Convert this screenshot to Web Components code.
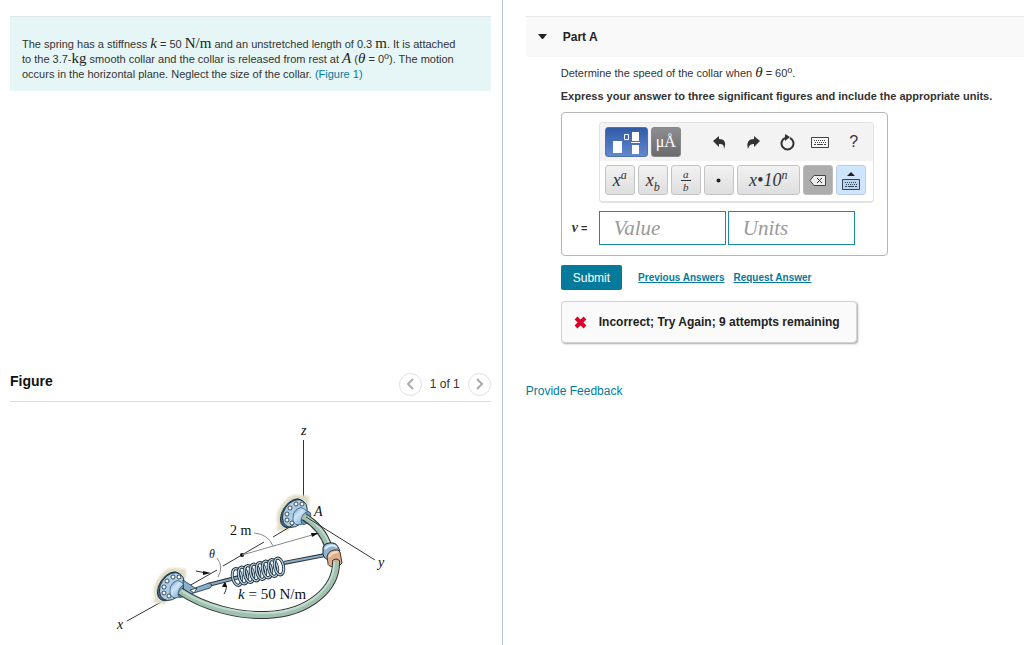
<!DOCTYPE html>
<html lang="en">
<head>
  <meta charset="UTF-8">
  <meta name="viewport" content="width=device-width, initial-scale=1.0">
  <title>Part A</title>
  <style>
    body { margin: 0; font: 12px/15px "Liberation Sans", Arial, sans-serif; color: #333; background: #fff; }
  </style>
</head>
<body>

<split-page>
  <problem-intro slot="left">
    The spring has a stiffness <math-text><i>k</i></math-text> = 50 <math-text>N/m</math-text> and an unstretched length of 0.3 <math-text>m</math-text>. It is attached to the 3.7-<math-text>kg</math-text> smooth collar and the collar is released from rest at <math-text><i>A</i></math-text> (<math-text><i>θ</i></math-text> = 0<degree-mark></degree-mark>). The motion occurs in the horizontal plane. Neglect the size of the collar. <text-link>(Figure 1)</text-link>
  </problem-intro>
  <figure-panel slot="figure">
    <span slot="title">Figure</span>
    <span slot="count">1 of 1</span>
    <collar-figure></collar-figure>
  </figure-panel>
  <part-panel slot="right">
    <span slot="title">Part A</span>
    <span slot="question">Determine the speed of the collar when <math-text><i>θ</i></math-text> = 60<degree-mark></degree-mark>.</span>
    <span slot="hint">Express your answer to three significant figures and include the appropriate units.</span>
    <answer-box></answer-box>
    <answer-actions></answer-actions>
    <result-note>Incorrect; Try Again; 9 attempts remaining</result-note>
  </part-panel>
  <text-link slot="feedback">Provide Feedback</text-link>
</split-page>


<template id="split-page">
  <style>
    :host { display: grid; grid-template-columns: 49% 1fr; min-height: 100vh; }
    .left { border-right: 1px solid #b5c7d6; margin-right: -1px; display: grid; grid-template-rows: 57vh 1fr; padding: 0 11px 0 10px; }
    .right { padding: 16px 0 0 24px; min-width: 0; }
    .intro { padding-top: 16px; }
    .feedback { margin-top: 41px; }
  </style>
  <div class="left">
    <div class="intro"><slot name="left"></slot></div>
    <slot name="figure"></slot>
  </div>
  <main class="right">
    <slot name="right"></slot>
    <div class="feedback"><slot name="feedback"></slot></div>
  </main>
</template>

<template id="problem-intro">
  <style>
    :host { display: block; background: #e6f6f7; border-top: 1px solid #dfe6e7; padding: 20px 28px 9px 12px; font-size: 11px; }
  </style>
  <slot></slot>
</template>

<!-- serif run inside a sans sentence -->
<template id="math-text">
  <style>
    :host { display: inline-block; font-family: "Liberation Serif", "Times New Roman", serif; font-size: 15px; line-height: 12px; color: #222; }
  </style>
  <slot></slot>
</template>

<template id="degree-mark">
  <style>
    :host { display: inline-block; font: 10px/8px "Liberation Serif", serif; vertical-align: 4px; }
  </style>
  o
</template>

<template id="text-link">
  <style>
    :host { display: inline-block; }
    a { color: #047a9c; text-decoration: none; }
    :host([strong]) a { font-weight: bold; font-size: 10px; text-decoration: underline; }
  </style>
  <a href="#"><slot></slot></a>
</template>

<template id="figure-panel">
  <style>
    :host { display: block; }
    header { display: flex; align-items: center; gap: 8px; height: 33px; border-bottom: 1px solid #ddd; }
    h2 { flex: 1; margin: 0; align-self: flex-start; font-size: 14px; line-height: 26px; color: #111; }
    button { width: 23px; height: 23px; padding: 0; border: 1px solid #e0e0e0; border-radius: 50%; background: #fff; display: grid; place-items: center; }
    path { fill: none; stroke: #aaa; stroke-width: 2; }
    .body { padding: 22px 0 0 100px; }
  </style>
  <header>
    <h2><slot name="title"></slot></h2>
    <button aria-label="Previous figure"><svg width="9" height="12"><path d="M7 1L2 6L7 11"/></svg></button>
    <slot name="count"></slot>
    <button aria-label="Next figure"><svg width="9" height="12"><path d="M2 1L7 6L2 11"/></svg></button>
  </header>
  <div class="body"><slot></slot></div>
</template>

<template id="collar-figure">
  <style>
    :host { display: block; }
    svg { display: block; font: 14px "Liberation Serif", "Times New Roman", serif; fill: #111; }
    .axis { stroke: #333; stroke-width: 1; fill: none; }
    .thin { stroke: #888; stroke-width: 1; fill: none; }
    .rim { stroke: #333; fill: none; stroke-linecap: butt; }
    .tube { stroke: #9fc1b0; fill: none; }
    .shine { stroke: #c3dccf; fill: none; stroke-width: 2; }
    .rod { stroke: #86aecb; fill: none; }
    .coil ellipse { fill: none; }
  </style>
  <svg width="290" height="215" viewBox="110 424 290 215" role="img" aria-label="Collar on a circular rod with spring">
    <defs>
      <filter id="soft" x="-30%" y="-30%" width="160%" height="160%"><feGaussianBlur stdDeviation="1"/></filter>
      <linearGradient id="hub" x1="0" y1="0" x2="1" y2="1"><stop offset="0" stop-color="#5f93bd"/><stop offset=".35" stop-color="#cfe6f7"/><stop offset="1" stop-color="#5c91bb"/></linearGradient>
      <g id="flange">
        <path d="M-16 12Q-20 2 -12 -9Q-4 -20 5 -18L15 -17L15 -8L0 10L-6 18L-18 17Z" fill="#dfdcc6" filter="url(#soft)"/>
        <ellipse cx="-1" cy="1" rx="10" ry="16" transform="rotate(34)" fill="#47677f" stroke="#182735" stroke-width=".8"/>
        <ellipse cx="1" rx="11" ry="15" transform="rotate(34)" fill="#a9cde7" stroke="#182735" stroke-width=".8"/>
        <g fill="#fff" stroke="#182735" stroke-width=".8">
          <circle cx="8" cy="-9" r="2"/><circle cx="2" cy="-9" r="2"/><circle cx="-4" cy="-5" r="2"/><circle cx="-7" cy="1" r="2"/><circle cx="-7" cy="7" r="2"/><circle cx="-2" cy="10" r="2"/>
        </g>
        <path d="M-1 6Q-2 0 3 -4Q7 -7 10 -4L16 0L10 11L4 12Q-1 11 -1 6Z" fill="url(#hub)" stroke="#274765" stroke-width=".7"/>
        <ellipse cx="12" cy="5" rx="4" ry="7" transform="rotate(28 12 5)" fill="#6d9cc2" stroke="#274765" stroke-width=".7"/>
      </g>
    </defs>

    <path class="axis" d="M303.5 440V505M127 621L163 601"/>
    <use href="#flange" x="171" y="586"/>
    <use href="#flange" x="294" y="513"/>

    <!-- line between the supports -->
    <path class="axis" d="M189 586L217 570M223 566L264 542M273 537L293 525"/>
    <circle cx="242" cy="555" r="2"/>
    <path class="thin" d="M242 555L312 535M254 533Q268 534 273 546M217 558Q224 567 218 577"/>
    <path class="axis" d="M196 571L206 573M225 583Q228 588 224 594"/>
    <path d="M211 573L203 571L203 575ZM225 581L222 587L227 587Z"/>

    <!-- links on both sides of the spring -->
    <path class="rim" stroke-width="4" d="M284 563L325 555M208 585L239 577"/>
    <path class="rod" stroke-width="2" d="M283 563L326 555M208 585L240 577"/>
    <path d="M183 580L195 588L209 583L212 585L210 588L197 592L184 596Z" fill="#88afcb" stroke="#1c2f40" stroke-width=".8"/>
    <path d="M190 590L197 588L194 593Z" fill="#fff" stroke="#1c2f40" stroke-width=".8"/>

    <!-- upper part of the rod -->
    <path class="rim" stroke-width="8" d="M304 517Q322 527 329 548"/>
    <path class="tube" stroke-width="6" d="M303 516Q322 527 329 548"/>
    <path class="shine" d="M306 517Q324 528 330 545"/>
    <path class="axis" d="M306 517L375 560"/>
    <path d="M319 533L311 533L312 537Z"/>

    <path d="M323 551Q322 544 329 543Q336 542 338 547L340 551L328 560Q322 557 323 551Z" fill="#8db5d1" stroke="#182735"/>
    <path d="M325 549Q330 543 337 547" stroke="#d9ebf8" stroke-width="2" fill="none"/>
    <path d="M327 557Q328 551 334 550Q339 549 340 552L342 563Q340 567 334 567Q327 566 328 563Z" fill="#ddb08e" stroke="#493126"/>
    <path d="M329 557Q332 552 338 552" stroke="#f3d9c4" stroke-width="2" fill="none"/>

    <!-- lower part of the rod -->
    <path class="rim" stroke-width="8" d="M180 591C205 608 239 616 267 615C311 613 337 587 336 561"/>
    <path class="tube" stroke-width="6" d="M180 591C205 608 239 616 267 615C311 613 337 587 336 561"/>
    <path class="shine" d="M182 591C206 607 240 614 267 613C309 612 335 586 334 562"/>
    <path d="M332 561Q336 557 340 561" stroke="#493126" fill="none"/>

    <g class="coil"></g>

    <text x="301" y="435" font-style="italic">z</text>
    <text x="314" y="516" font-style="italic">A</text>
    <text x="378" y="567" font-style="italic">y</text>
    <text x="117" y="629" font-style="italic">x</text>
    <text x="209" y="558" font-style="italic" font-size="12">θ</text>
    <text x="230" y="535">2 m</text>
    <text x="238" y="599" font-size="15"><tspan font-style="italic">k</tspan> = 50 N/m</text>
  </svg>
</template>

<template id="part-panel">
  <style>
    :host { display: block; }
    header { display: flex; align-items: center; gap: 16px; height: 40px; padding-left: 12px; background: #f9f9f9; border-top: 1px solid #e8e8e8; }
    h2 { margin: 0; font-size: 12px; color: #222; }
    .body { padding: 9px 16px 0 35px; }
    p { margin: 0 0 8px; font-size: 11px; }
    .hint { font-weight: bold; margin-bottom: 8px; }
  </style>
  <header>
    <svg width="9" height="6"><path d="M0 0H9L5 5H4Z" fill="#222"/></svg>
    <h2><slot name="title"></slot></h2>
  </header>
  <div class="body">
    <p><slot name="question"></slot></p>
    <p class="hint"><slot name="hint"></slot></p>
    <slot></slot>
  </div>
</template>

<template id="math-key">
  <style>
    :host { display: block; width: 30px; height: 30px; }
    :host([wide]) { width: 63px; }
    button { width: 100%; height: 100%; padding: 0; display: grid; place-items: center; border: 1px solid #c4c4c4; border-radius: 3px; background: linear-gradient(#f2f2f2, #dedede); color: #333; font: italic 18px/20px "Liberation Serif", serif; }
    :host([kind="blue"]) { width: 43px; }
    :host([kind="blue"]) button { background: linear-gradient(#2f5ba7, #6288cd); border-color: #4e72ad; }
    :host([kind="dark"]) button { background: linear-gradient(#8d8d91, #6b6b6d); border-color: #888; color: #fff; font-style: normal; font-size: 16px; }
    :host([kind="plain"]) { width: 24px; }
    :host([kind="plain"]) button { background: none; border: 0; font: 16px "Liberation Sans", sans-serif; }
    :host([kind="grey"]) button { background: #adadad; border-color: #bbb; }
    :host([kind="light"]) button { background: #cfe5ff; border-color: #bbcddf; }
  </style>
  <button><slot></slot></button>
</template>

<template id="math-toolbar">
  <style>
    :host { display: block; width: max-content; border: 1px solid #e2e2e2; border-bottom-width: 2px; border-radius: 4px; overflow: hidden; }
    .row { display: flex; align-items: center; gap: 3px; padding: 4px 7px 6px 5px; }
    .top { background: #f3f3f3; padding-bottom: 4px; }
    .icons { display: flex; flex: 1; justify-content: space-between; padding: 0 0 0 24px; }
    svg { display: block; }
    sup, sub { font-size: 12px; line-height: 0; }
    .frac { display: grid; font-size: 11px; line-height: 12px; text-align: center; }
    .frac span + span { border-top: 1px solid #333; padding: 0 2px; }
  </style>
  <div class="row top">
    <math-key kind="blue" label="Templates">
      <svg width="30" height="24" fill="#fff"><path d="M2 11H11V23H2ZM21 2H28V11H21ZM21 15H28V24H21ZM20 12H29V13H20Z"/><path d="M13.5 4.5H17.5V9.5H13.5Z" fill="none" stroke="#fff"/></svg>
    </math-key>
    <math-key kind="dark" label="Symbols">μÅ</math-key>
    <div class="icons">
      <math-key kind="plain" label="Undo"><svg width="14" height="13"><path d="M6 0V3C11 3 14 6 11 13C11 9 10 8 6 8V11L0 5Z" fill="#333"/></svg></math-key>
      <math-key kind="plain" label="Redo"><svg width="14" height="13"><path d="M8 0V3C3 3 0 6 2 13C3 9 5 8 8 8V11L14 5Z" fill="#333"/></svg></math-key>
      <math-key kind="plain" label="Reset"><svg width="16" height="17"><path d="M11 4A6 6 0 1 1 6 4" fill="none" stroke="#333" stroke-width="2"/><path d="M6 0L11 3L6 7Z" fill="#333"/></svg></math-key>
      <math-key kind="plain" label="Keyboard shortcuts"><svg width="18" height="12"><path d="M.5 1.5H17.5V11.5H.5Z" fill="#f8f8f8" stroke="#444"/><path d="M3 4.5H15M4 6.5H15" stroke="#444" stroke-dasharray="1 1"/><path d="M3 8.5H5M6 8.5H12M13 8.5H15" stroke="#444"/></svg></math-key>
      <math-key kind="plain" label="Help">?</math-key>
    </div>
  </div>
  <div class="row">
    <math-key label="Superscript"><span><i>x</i><sup>a</sup></span></math-key>
    <math-key label="Subscript"><span><i>x</i><sub>b</sub></span></math-key>
    <math-key label="Fraction"><span class="frac"><span>a</span><span>b</span></span></math-key>
    <math-key label="Multiply"><svg width="5" height="5"><circle cx="2.5" cy="2.5" r="2" fill="#222"/></svg></math-key>
    <math-key wide label="Scientific notation"><span>x•10<sup>n</sup></span></math-key>
    <math-key kind="grey" label="Delete"><svg width="17" height="11"><path d="M1 5.5L5 .5H16.5V10.5H5Z" fill="#eee" stroke="#444"/><path d="M8 3L13 8M13 3L8 8" stroke="#333"/></svg></math-key>
    <math-key kind="light" label="Hide keyboard"><svg width="18" height="19"><path d="M5 5L9 1L13 5Z" fill="#222"/><path d="M.5 8.5H17.5V18.5H.5Z" fill="#b8d4ef" stroke="#345"/><path d="M3 11.5H15M4 13.5H15" stroke="#345" stroke-dasharray="1 1"/><path d="M3 15.5H5M6 15.5H12M13 15.5H15" stroke="#345"/></svg></math-key>
  </div>
</template>

<template id="answer-box">
  <style>
    :host { display: grid; grid-template-columns: 27px max-content; row-gap: 8px; width: max-content; padding: 9px 13px 10px 10px; border: 1px solid #b5b5b5; border-radius: 4px; }
    math-toolbar { grid-column: 2; }
    label { align-self: center; font-weight: bold; font-size: 11px; }
    label i { font-family: "Liberation Serif", serif; font-size: 14px; }
    .fields { display: flex; gap: 2px; }
    input { box-sizing: border-box; width: 127px; height: 34px; padding: 0 14px; border: 1px solid #1b8aa8; background: #fff; font: italic 21px "Liberation Serif", serif; }
    input::placeholder { color: #999; opacity: 1; }
  </style>
  <math-toolbar></math-toolbar>
  <label for="value"><i>v</i> =</label>
  <div class="fields">
    <input id="value" placeholder="Value">
    <input aria-label="Units" placeholder="Units">
  </div>
</template>

<template id="answer-actions">
  <style>
    :host { display: flex; align-items: center; gap: 9px; margin-top: 9px; }
    button { height: 25px; padding: 0 12px; margin-right: 7px; border: 0; border-radius: 2px; background: #047a9c; color: #fff; font: 12px "Liberation Sans", Arial, sans-serif; }
  </style>
  <button>Submit</button>
  <text-link strong>Previous Answers</text-link>
  <text-link strong>Request Answer</text-link>
</template>

<template id="result-note">
  <style>
    :host { display: flex; align-items: center; gap: 12px; box-sizing: border-box; width: max-content; height: 42px; margin-top: 11px; padding: 0 16px 0 12px; border: 1px solid #d2d2d2; border-radius: 4px; background: #fafafa; box-shadow: 1px 1px 2px #aaa; color: #222; font-weight: bold; }
  </style>
  <svg width="13" height="13"><path d="M2 2L11 11M11 2L2 11" stroke="#d9042b" stroke-width="4"/></svg>
  <span><slot></slot></span>
</template>

<script>
// every element clones the template that carries its own name
class TemplateElement extends HTMLElement {
  constructor() {
    super();
    const tpl = document.getElementById(this.localName);
    this.attachShadow({ mode: 'open' }).append(tpl.content.cloneNode(true));
  }
}

class MathKey extends TemplateElement {
  connectedCallback() {
    this.shadowRoot.querySelector('button').setAttribute('aria-label', this.getAttribute('label'));
  }
}

class CollarFigure extends TemplateElement {
  connectedCallback() {
    // each turn is a dark ring with a lighter one over it
    let turns = '';
    for (let i = 0; i < 8; i++) {
      const x = 237 + i * 6;
      const y = 577 - i * 1.5;
      const shape = `cx="${x}" cy="${y}" rx="4.5" ry="8.5" transform="rotate(-12 ${x} ${y})"`;
      turns += `<ellipse ${shape} stroke="#1c2b38" stroke-width="3"/><ellipse ${shape} stroke="#b3cfe0" stroke-width="1.4"/>`;
    }
    this.shadowRoot.querySelector('.coil').innerHTML = turns;
  }
}

customElements.define('math-key', MathKey);
customElements.define('collar-figure', CollarFigure);

['split-page', 'problem-intro', 'math-text', 'degree-mark', 'text-link', 'figure-panel',
 'part-panel', 'math-toolbar', 'answer-box', 'answer-actions', 'result-note'].forEach(name => {
  customElements.define(name, class extends TemplateElement {});
});
</script>

</body>
</html>
